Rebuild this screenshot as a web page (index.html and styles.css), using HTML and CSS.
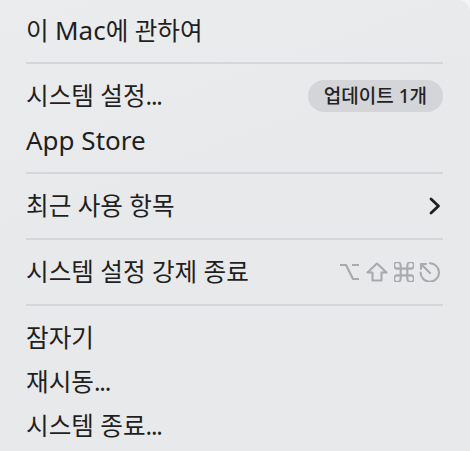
FILE: index.html
```html
<!DOCTYPE html>
<html lang="ko">
<head>
<meta charset="utf-8">
<link rel="stylesheet" href="styles.css">
</head>
<body>
<div class="menu">
  <div class="item first"><span class="label">이 <span class="lat">Mac</span>에 관하여</span></div>
  <div class="sep"></div>
  <div class="item"><span class="label">시스템 설정<span class="dots">...</span></span><span class="badge">업데이트 1개</span></div>
  <div class="item"><span class="label lat">App Store</span></div>
  <div class="sep"></div>
  <div class="item"><span class="label">최근 사용 항목</span>
    <svg class="chev" width="12" height="18" viewBox="0 0 12 18"><path d="M2 2 L9.5 9 L2 16" fill="none" stroke="#1f1f1f" stroke-width="2.8" stroke-linecap="round" stroke-linejoin="round"/></svg>
  </div>
  <div class="sep"></div>
  <div class="item"><span class="label">시스템 설정 강제 종료</span>
    <span class="keys">
      <svg class="k-opt" width="21" height="20" viewBox="0 0 21 20"><path d="M1 3 H7 L14 17 H20 M13 3 H20" fill="none" stroke="#a9aaad" stroke-width="2.2" stroke-linejoin="round"/></svg>
      <svg class="k-shift" width="22" height="20" viewBox="0 0 22 20"><path d="M11 1.5 L20.5 10.5 H15.5 V18.5 H6.5 V10.5 H1.5 Z" fill="none" stroke="#a9aaad" stroke-width="2.1" stroke-linejoin="round"/></svg>
      <svg class="k-cmd" width="20" height="20" viewBox="3 3 18 18"><path d="M15 6v12a3 3 0 1 0 3-3H6a3 3 0 1 0 3 3V6a3 3 0 1 0-3 3h12a3 3 0 1 0-3-3" fill="none" stroke="#a9aaad" stroke-width="1.9" stroke-linejoin="round"/></svg>
      <svg class="k-esc" width="23" height="20" viewBox="0 0 23 20"><path d="M12 1.3 A9.2 9.2 0 1 1 2.6 10.5 M12 11 L3 2 M3 2 H8 M3 2 V7" fill="none" stroke="#a9aaad" stroke-width="2.1" stroke-linecap="round" stroke-linejoin="round"/></svg>
    </span>
  </div>
  <div class="sep"></div>
  <div class="item"><span class="label">잠자기</span></div>
  <div class="item"><span class="label">재시동<span class="dots">...</span></span></div>
  <div class="item"><span class="label">시스템 종료<span class="dots">...</span></span></div>
</div>
</body>
</html>
```
FILE: styles.css
```css
html, body {
  margin: 0;
  padding: 0;
  background: #f5f5f6;
}
.menu {
  width: 470px;
  height: 451px;
  box-sizing: border-box;
  background: linear-gradient(160deg, #ebecee 0%, #e8e9eb 40%, #e8e9eb 100%);
  border-top-right-radius: 12px;
  padding: 8px 27px 3px 26px;
  display: flex;
  flex-direction: column;
  font-family: "Noto Sans", "Noto Sans CJK KR", sans-serif;
  color: #1f1f1f;
}
.item {
  height: 44px;
  display: flex;
  align-items: center;
  justify-content: space-between;
  font-size: 24.6px;
  line-height: 1;
}
.label {
  white-space: nowrap;
}
.lat {
  font-size: 26px;
}
.dots {
  letter-spacing: -1.2px;
}
.sep {
  height: 22px;
  display: flex;
  align-items: center;
}
.sep::before {
  content: "";
  display: block;
  width: 100%;
  height: 2px;
  background: #d5d6d9;
}
.badge {
  height: 32px;
  padding: 0 16px;
  border-radius: 16px;
  background: #d4d5d8;
  display: flex;
  align-items: center;
  font-size: 19px;
  font-weight: 500;
  color: #222;
}
.chev {
  display: block;
  margin-right: 2px;
}
.keys {
  display: flex;
  align-items: center;
  margin-right: 2px;
}
.keys svg {
  display: block;
}
.k-shift {
  margin-left: 6px;
}
.k-cmd {
  margin-left: 6px;
}
.k-esc {
  margin-left: 4px;
}
```
